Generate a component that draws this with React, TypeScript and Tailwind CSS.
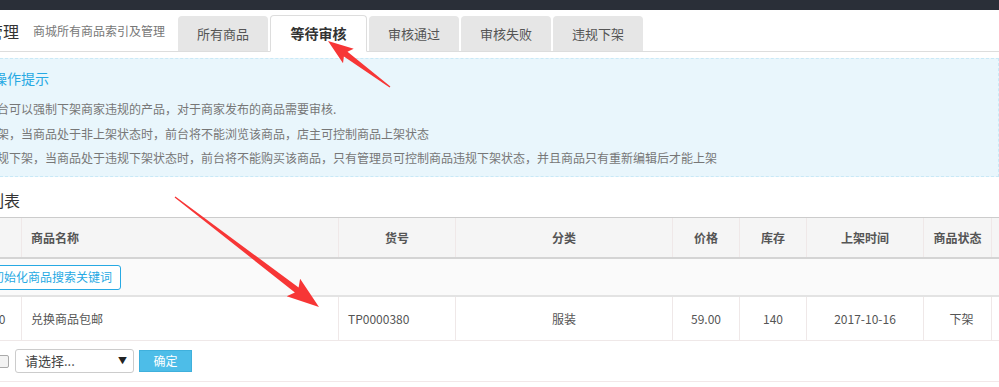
import React from 'react';

const FONT = { fontFamily: '"Noto Sans CJK SC", "Noto Sans", "Liberation Sans", sans-serif' };

const TABS = ['所有商品', '等待审核', '审核通过', '审核失败', '违规下架'];

const TIPS = [
    '平台可以强制下架商家违规的产品，对于商家发布的商品需要审核.',
    '下架，当商品处于非上架状态时，前台将不能浏览该商品，店主可控制商品上架状态',
    '违规下架，当商品处于违规下架状态时，前台将不能购买该商品，只有管理员可控制商品违规下架状态，并且商品只有重新编辑后才能上架',
];

const COLS = [
    { label: '', align: 'text-center' },
    { label: '商品名称', align: 'text-left pl-[9px]' },
    { label: '货号', align: 'text-center' },
    { label: '分类', align: 'text-center' },
    { label: '价格', align: 'text-center' },
    { label: '库存', align: 'text-center' },
    { label: '上架时间', align: 'text-center' },
    { label: '商品状态', align: 'text-center' },
    { label: '', align: 'text-center' },
];

const GRID = 'grid grid-cols-[52px_317px_117px_217px_67px_67px_117px_68px_60px]';

function arrowPoints(x1: number, y1: number, x2: number, y2: number, head: number, half: number) {
    const len = Math.hypot(x2 - x1, y2 - y1);
    const dx = (x2 - x1) / len;
    const dy = (y2 - y1) / len;
    const nx = -dy;
    const ny = dx;
    const bx = x2 - dx * head;
    const by = y2 - dy * head;
    const bbx = x2 - dx * head * 1.15;
    const bby = y2 - dy * head * 1.15;
    const pts = [
        [x1 + nx * 0.6, y1 + ny * 0.6],
        [bx + nx * 3, by + ny * 3],
        [bbx + nx * half, bby + ny * half],
        [x2, y2],
        [bbx - nx * half, bby - ny * half],
        [bx - nx * 3, by - ny * 3],
        [x1 - nx * 0.6, y1 - ny * 0.6],
    ];
    return pts.map(p => p.map(v => v.toFixed(1)).join(',')).join(' ');
}

const Arrows: React.FC = () => (
    <svg className="absolute inset-0 pointer-events-none" width="999" height="387" viewBox="0 0 999 387">
        <polygon points={arrowPoints(390, 87, 328, 41, 22, 9)} fill="#f73636" />
        <polygon points={arrowPoints(175, 197, 319, 307, 28, 11)} fill="#f73636" />
    </svg>
);

export default function App() {
    return (
        <div className="relative w-[999px] h-[387px] overflow-hidden bg-white text-[#555]" style={FONT}>
            <div className="h-[10px] bg-[#2a2f38]" />

            {/* header with tabs */}
            <div className="flex items-end h-[42px] border-b border-[#ddd] ml-[-45px]">
                <div className="flex items-center h-full gap-[14px]">
                    <h2 className="text-[16px] text-[#333] leading-none whitespace-nowrap">商品管理</h2>
                    <span className="text-[12px] text-[#777] whitespace-nowrap">商城所有商品索引及管理</span>
                </div>
                <div className="flex items-end gap-[2px] ml-[13px]">
                    {TABS.map((tab, i) =>
                        i === 1 ? (
                            <div key={tab} className="w-[97px] h-[37px] -mb-px bg-white border border-[#ddd] border-b-white rounded-t-[4px] flex items-center justify-center text-[14px] font-bold text-[#333]">
                                {tab}
                            </div>
                        ) : (
                            <div key={tab} className="w-[90px] h-[35px] bg-[#e6e6e6] rounded-t-[4px] flex items-center justify-center text-[13px] text-[#555]">
                                {tab}
                            </div>
                        )
                    )}
                </div>
            </div>

            {/* tips */}
            <div className="mt-[6px] ml-[-20px] h-[119px] bg-[#e9f6fc] border border-dashed border-[#c9e9f7] pt-[9px]">
                <h3 className="ml-[12px] text-[14px] leading-[20px] text-[#27a9e3]">操作提示</h3>
                <ul className="mt-[9px] ml-[4px] text-[12px] leading-[24.5px] text-[#777]">
                    {TIPS.map(t => (
                        <li key={t} className="whitespace-nowrap">{t}</li>
                    ))}
                </ul>
            </div>

            {/* list title */}
            <h3 className="ml-[-44px] pt-[12px] mb-[6px] text-[16px] leading-[22px] text-[#333] whitespace-nowrap">商品列表</h3>

            {/* table */}
            <div className="ml-[-30px] w-[1060px]">
                <div className={`${GRID} h-[42px] bg-[#f5f5f5] border-t border-[#ccc] border-b-2 border-b-[#d4d4d4] text-[12px] font-bold text-[#555]`}>
                    {COLS.map((c, i) => (
                        <div key={i} className={`flex items-center ${c.align.includes('left') ? 'justify-start pl-[9px]' : 'justify-center'} border-r border-[#efe8e8]`}>
                            {c.label}
                        </div>
                    ))}
                </div>

                <div className="h-[38px] bg-[#fafafa] border-b-2 border-[#e3e3e3] flex items-center pl-[13px]">
                    <button className="h-[25px] px-[8px] bg-white border border-[#27a9e3] rounded-[3px] text-[12px] text-[#27a9e3] leading-none">
                        初始化商品搜索关键词
                    </button>
                </div>

                <div className={`${GRID} h-[44px] border-b border-[#efe8e8] text-[12px] text-[#555]`}>
                    <div className="flex items-center justify-center border-r border-[#efe8e8]">380</div>
                    <div className="flex items-center pl-[9px] border-r border-[#efe8e8]">兑换商品包邮</div>
                    <div className="flex items-center pl-[9px] border-r border-[#efe8e8]">TP0000380</div>
                    <div className="flex items-center justify-center border-r border-[#efe8e8]">服装</div>
                    <div className="flex items-center justify-center border-r border-[#efe8e8]">59.00</div>
                    <div className="flex items-center justify-center border-r border-[#efe8e8]">140</div>
                    <div className="flex items-center justify-center border-r border-[#efe8e8]">2017-10-16</div>
                    <div className="flex items-center justify-center pl-[8px] border-r border-[#efe8e8]">下架</div>
                    <div className="border-r border-[#efe8e8]" />
                </div>

                <div className="h-[41px] border-b border-[#f2e8e9] flex items-center pl-[26px]">
                    <span className="w-[13px] h-[13px] border border-[#aaa] rounded-[2px] bg-[#f3f3f3]" />
                    <div className="ml-[6px] w-[119px] h-[24px] border border-[#ccc] rounded-[3px] flex items-center justify-between pl-[9px] pr-[6px] text-[13px] text-[#444]">
                        <span>请选择...</span>
                        <span className="text-[9px] text-[#222]">▼</span>
                    </div>
                    <button className="ml-[5px] w-[53px] h-[22px] bg-[#4dbde8] border border-[#3fb0dc] text-white text-[12px] leading-none">
                        确定
                    </button>
                </div>
            </div>

            <Arrows />
        </div>
    );
}
